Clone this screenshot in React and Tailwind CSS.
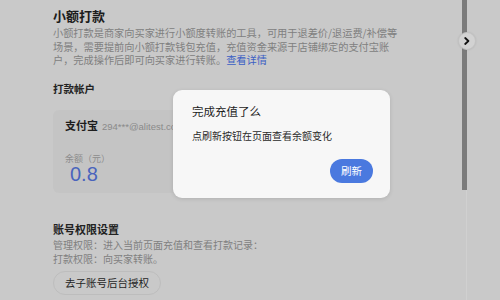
import React from 'react'

const font = { fontFamily: '"Noto Sans CJK SC", "Noto Sans", sans-serif' }

function Scrollbar() {
  return (
    <>
      <div className="absolute left-[462px] top-0 h-[190px] w-[5px] bg-[#7b7b7b]"></div>
      <div className="absolute left-[466px] top-[190px] h-[110px] w-px bg-[#d0d0d0]"></div>
      <div className="absolute left-[458px] top-[32px] flex h-[18px] w-[18px] items-center justify-center rounded-full border border-[#c2c2c2] bg-[#d2d2d2] shadow-[0_0_2px_rgba(0,0,0,0.1)]">
        <svg width="6" height="8" viewBox="0 0 6 8">
          <path d="M1.2 1 L4.4 4 L1.2 7" fill="none" stroke="#111" strokeWidth="1.8" strokeLinecap="round" strokeLinejoin="round" />
        </svg>
      </div>
    </>
  )
}

function Modal() {
  return (
    <div className="absolute left-[173px] top-[90px] h-[108px] w-[217px] rounded-[9px] bg-[#f7f7f7] px-[19px] pt-[13px] shadow-[0_1px_4px_rgba(0,0,0,0.12)]">
      <div className="text-[11.5px] leading-[16px] text-[#1d1d1d]">完成充值了么</div>
      <div className="mt-[10px] text-[10px] leading-[14px] text-[#2a2a2a]">点刷新按钮在页面查看余额变化</div>
      <div className="mt-[16px] flex justify-end">
        <button className="-mr-[2px] flex h-[24px] w-[43px] items-center justify-center rounded-full bg-[#4a79df] text-[10.5px] text-white">
          刷新
        </button>
      </div>
    </div>
  )
}

export default function App() {
  return (
    <div className="relative h-[300px] w-[500px] overflow-hidden bg-[#c9c9c9]" style={font}>
      <div className="flex flex-col pl-[53px] pt-[8px]">
        <div className="text-[13px] font-bold leading-[16px] text-[#1c1c1c]">小额打款</div>
        <div className="mt-[2px] whitespace-nowrap text-[10.2px] leading-[13.5px] text-[#808080]">
          <div>小额打款是商家向买家进行小额度转账的工具，可用于退差价/退运费/补偿等</div>
          <div>场景，需要提前向小额打款钱包充值，充值资金来源于店铺绑定的支付宝账</div>
          <div>
            户，完成操作后即可向买家进行转账。<span className="text-[#3b5fc4]">查看详情</span>
          </div>
        </div>

        <div className="mt-[15px] text-[10.5px] font-bold leading-[14px] text-[#222]">打款帐户</div>

        <div className="mt-[14px] h-[83px] w-[300px] rounded-[6px] bg-[#c4c4c4] px-[12px] pt-[8px]">
          <div className="flex items-baseline gap-[4px] whitespace-nowrap">
            <span className="text-[11px] font-bold leading-[14px] text-[#1d1d1d]">支付宝</span>
            <span className="text-[9.5px] leading-[14px] text-[#8a8a8a]" style={{ fontFamily: '"Liberation Sans", sans-serif' }}>
              294***@alitest.com
            </span>
          </div>
          <div className="mt-[19px] text-[9px] leading-[12px] text-[#8c8c8c]">余额（元）</div>
          <div className="-mt-[1px] pl-[5px] text-[20px] leading-[20px] text-[#4a64bd]" style={{ fontFamily: '"Liberation Sans", sans-serif' }}>
            0.8
          </div>
        </div>

        <div className="mt-[29px] text-[11px] font-bold leading-[14px] text-[#222]">账号权限设置</div>
        <div className="mt-[2px] text-[10px] leading-[14px] text-[#808080]">
          <div>管理权限：进入当前页面充值和查看打款记录：</div>
          <div>打款权限：向买家转账。</div>
        </div>
        <div className="mt-[5px]">
          <button className="flex h-[24px] items-center rounded-full border border-[#bdbdbd] px-[11px] text-[10.5px] text-[#1f1f1f]">
            去子账号后台授权
          </button>
        </div>
      </div>

      <Scrollbar />
      <Modal />
    </div>
  )
}
